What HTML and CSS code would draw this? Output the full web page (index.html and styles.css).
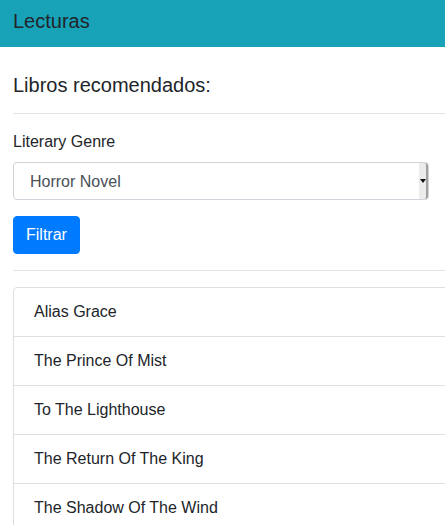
FILE: index.html
```html
<!DOCTYPE html>
<html lang="es">
<head>
<meta charset="utf-8">
<title>Lecturas</title>
<link rel="stylesheet" href="styles.css">
</head>
<body>
<nav class="navbar"><span class="brand">Lecturas</span></nav>
<main class="container">
  <h5 class="title">Libros recomendados:</h5>
  <hr class="divider">
  <form class="filter">
    <label class="label" for="genre">Literary Genre</label>
    <div class="select-wrap">
      <select id="genre" class="select">
        <option>Horror Novel</option>
      </select>
      <span class="select-btn"><span class="caret"></span></span>
    </div>
    <button type="button" class="btn">Filtrar</button>
  </form>
  <hr class="divider">
  <ul class="list">
    <li class="item">Alias Grace</li>
    <li class="item">The Prince Of Mist</li>
    <li class="item">To The Lighthouse</li>
    <li class="item">The Return Of The King</li>
    <li class="item">The Shadow Of The Wind</li>
  </ul>
</main>
</body>
</html>
```

FILE: styles.css
```css
html, body {
  margin: 0;
  padding: 0;
  overflow: hidden;
}
body {
  font-family: "Liberation Sans", Arial, sans-serif;
  font-size: 16px;
  line-height: 1.5;
  color: #212529;
  background: #fff;
}
.navbar {
  height: 47px;
  box-sizing: border-box;
  background: #17a2b8;
  padding: 6px 13px 0;
}
.brand {
  display: block;
  font-size: 20px;
  line-height: 30px;
  color: #212529;
}
.container {
  width: 480px;
  padding: 0 0 0 13px;
}
.title {
  margin: 26px 0 0;
  font-size: 20px;
  font-weight: 400;
  line-height: 24px;
}
.divider {
  margin: 16px 0 0;
  border: 0;
  border-top: 1px solid #e5e5e5;
  height: 0;
}
.filter {
  padding-top: 16px;
  display: flex;
  flex-direction: column;
  align-items: flex-start;
}
.label {
  display: block;
  margin-bottom: 8px;
  line-height: 24px;
}
.select-wrap {
  position: relative;
  width: 416px;
  height: 38px;
}
.select {
  display: block;
  width: 416px;
  height: 38px;
  box-sizing: border-box;
  -webkit-appearance: none;
  appearance: none;
  border: 1px solid #ced4da;
  border-radius: 4px;
  background: #fff;
  padding: 0 16px;
  font-family: inherit;
  font-size: 16px;
  color: #495057;
}
.select-btn {
  position: absolute;
  top: 1px;
  right: 1px;
  width: 9px;
  height: 36px;
  background: #ececec;
  border-right: 2px solid #a0a0a0;
  box-sizing: border-box;
  display: flex;
  align-items: center;
  justify-content: center;
  border-radius: 0 3px 3px 0;
}
.caret {
  width: 0;
  height: 0;
  border-left: 3px solid transparent;
  border-right: 3px solid transparent;
  border-top: 4px solid #111;
}
.btn {
  margin-top: 16px;
  height: 38px;
  padding: 0 12px;
  border: 1px solid #007bff;
  border-radius: 4px;
  background: #007bff;
  color: #fff;
  font-family: inherit;
  font-size: 16px;
  line-height: 24px;
}
.list {
  list-style: none;
  margin: 16px 0 0;
  padding: 0;
  border: 1px solid #dfdfdf;
  border-radius: 4px;
}
.item {
  padding: 12px 20px;
  line-height: 24px;
  border-top: 1px solid #dfdfdf;
}
.item:first-child {
  border-top: 0;
}
```
